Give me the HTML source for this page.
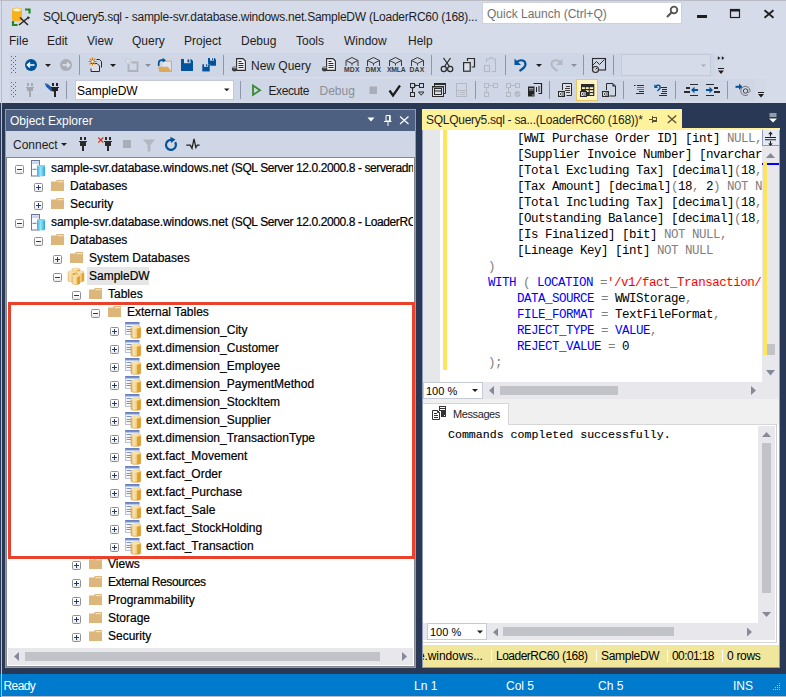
<!DOCTYPE html>
<html><head><meta charset="utf-8">
<style>
*{margin:0;padding:0;box-sizing:border-box}
html,body{width:786px;height:697px;overflow:hidden;background:#d6dbe9;font-family:"Liberation Sans",sans-serif;font-size:12px;color:#1e1e1e}
.a{position:absolute}
.t{position:absolute;white-space:nowrap;line-height:1}
svg{position:absolute;overflow:visible}
.exp{position:absolute;width:9px;height:9px;border:1px solid #8f8f8f;border-radius:1.5px;background:linear-gradient(#fff 45%,#e6e6e6)}
.tree{color:#000;font-size:12px;-webkit-text-stroke:0.2px #000}
.code{font-family:"Liberation Mono",monospace;font-size:12.5px;letter-spacing:-0.5px;color:#000}
.kw{color:#0000ff}.op{color:#808080}.st{color:#ff0000}
.sb{position:absolute;background:#e8e8ec}
.th{position:absolute;background:#c2c3c9}
.qs{color:#000;font-size:12px}
.qsep{position:absolute;width:1px;height:12px;background:#fff}
</style></head><body>
<!-- window frame -->


<!-- TITLE BAR -->
<div class="t" style="left:43px;top:11px;font-size:12px;letter-spacing:-0.25px;color:#1e1e1e">SQLQuery5.sql - sample-svr.database.windows.net.SampleDW (LoaderRC60 (168)...</div>
<div class="a" style="left:482px;top:2px;width:200px;height:22px;background:#fff;border:1px solid #cdd1dc"></div>
<div class="t" style="left:487px;top:8px;font-size:12px;color:#717171">Quick Launch (Ctrl+Q)</div>

<!-- MENU -->
<div class="t" style="left:9px;top:35px">File</div>
<div class="t" style="left:47px;top:35px">Edit</div>
<div class="t" style="left:87px;top:35px">View</div>
<div class="t" style="left:132px;top:35px">Query</div>
<div class="t" style="left:184px;top:35px">Project</div>
<div class="t" style="left:241px;top:35px">Debug</div>
<div class="t" style="left:296px;top:35px">Tools</div>
<div class="t" style="left:344px;top:35px">Window</div>
<div class="t" style="left:408px;top:35px">Help</div>

<!-- TOOLBARS -->
<div class="a" style="left:9px;top:53px;width:706px;height:24px;background:#cfd6e5"></div>
<div class="a" style="left:715px;top:53px;width:11px;height:24px;background:#d3d9e6"></div>
<div class="a" style="left:9px;top:79px;width:746px;height:22px;background:#cfd6e5"></div>
<div class="a" style="left:755px;top:79px;width:11px;height:22px;background:#d3d9e6"></div>
<svg style="left:0;top:0" width="786" height="104" viewBox="0 0 786 104" shape-rendering="auto">
<defs>
<pattern id="grip" x="11" y="56" width="4" height="4" patternUnits="userSpaceOnUse"><rect x="0" y="0" width="1" height="1" fill="#5f6679"/><rect x="2" y="2" width="1" height="1" fill="#5f6679"/></pattern><pattern id="grip2" x="11" y="82" width="4" height="4" patternUnits="userSpaceOnUse"><rect x="0" y="0" width="1" height="1" fill="#5f6679"/><rect x="2" y="2" width="1" height="1" fill="#5f6679"/></pattern>
</defs>
<!-- ===== TOOLBAR 1 ===== -->
<rect x="11" y="56" width="5" height="17" fill="url(#grip)"/>
<!-- back -->
<circle cx="31" cy="65" r="6" fill="#00539c"/>
<path d="M27.5 65h7M30 62.5L27.5 65L30 67.5" stroke="#fff" stroke-width="1.6" fill="none"/>
<path d="M45 64h6l-3 3z" fill="#1e1e1e"/>
<!-- forward gray -->
<circle cx="66" cy="65" r="6" fill="#a9adb7"/>
<path d="M62.5 65h7M67 62.5L69.5 65L67 67.5" stroke="#dfe3ec" stroke-width="1.6" fill="none"/>
<rect x="79" y="55" width="1" height="20" fill="#8e97ab"/>
<!-- new project -->
<path d="M96.5 59.5h3l2 2v6" fill="none" stroke="#2b2b2b" stroke-width="1"/>
<path d="M90.5 64v-0.5h6.5l2.5 2.5v5.5h-8.5v-3" fill="#dcdfe8" stroke="#2b2b2b" stroke-width="1"/>
<path d="M92.5 57.5v8M88.5 61.5h8M89.7 58.7l5.6 5.6M95.3 58.7l-5.6 5.6" stroke="#d67d0a" stroke-width="1.1"/>
<circle cx="92.5" cy="61.5" r="1.5" fill="#fff" stroke="#d67d0a" stroke-width="0.8"/>
<path d="M110 64h6l-3 3z" fill="#1e1e1e"/>
<!-- add item gray -->
<path d="M128.5 64v7h9v-8.5h-6" fill="none" stroke="#aeb2bc" stroke-width="1.8"/>
<path d="M128 57.5v7M124.5 61h7M125.5 58.5l5 5M130.5 58.5l-5 5" stroke="#c8cbd3" stroke-width="1"/>
<circle cx="128" cy="61" r="1.2" fill="#e4e6ec"/>
<path d="M145 64h6l-3 3z" fill="#8a8e98"/>
<!-- open -->
<path d="M162.5 61.2h9v10.5h-9z" fill="#dfe3ec"/>
<path d="M162.5 61.2h9v10.7" fill="none" stroke="#dcaa5a" stroke-width="1"/>
<path d="M158 66.8h10l4 5.2h-12.5z" fill="#dcaa5a"/>
<path d="M158.7 66v-2.8c0-2 1.2-3 3.2-3h1.6" fill="none" stroke="#00539c" stroke-width="1.7"/>
<path d="M162.7 57.8l3.3 2.4-3.3 2.4z" fill="#00539c"/>
<!-- save -->
<path d="M181 59h10l2 2v10h-12z" fill="#00539c"/>
<rect x="184" y="59" width="6.5" height="4.2" fill="#d6dbe9"/>
<rect x="187.5" y="59.5" width="1.8" height="2.8" fill="#00539c"/>
<!-- save all -->
<path d="M208 58h6.5l1.5 1.5v6.3h-8z" fill="#00539c"/>
<rect x="210" y="58" width="4" height="2.6" fill="#d6dbe9"/><rect x="212" y="58.3" width="1.2" height="1.8" fill="#00539c"/>
<path d="M202 64h6.5l1.5 1.5v6.3h-8z" fill="#00539c" stroke="#cfd6e5" stroke-width="0.6"/>
<rect x="204" y="64.2" width="4" height="2.6" fill="#d6dbe9"/><rect x="206" y="64.5" width="1.2" height="1.8" fill="#00539c"/>
<rect x="223" y="55" width="1" height="20" fill="#8e97ab"/>
<!-- new query -->
<g id="nq">
<path d="M236.6 58.6h6.4l2.4 2.4v9.4h-8.8z" fill="#f1f2f6" stroke="#2b2b2b" stroke-width="1.1"/>
<path d="M238.5 61.5h3M238.5 63.5h5M238.5 65.5h5M238.5 67.5h5" stroke="#2b2b2b" stroke-width="1"/>
<ellipse cx="234.5" cy="69" rx="2.6" ry="2.4" fill="#3b3b3b"/>
<ellipse cx="234.5" cy="67.4" rx="2.4" ry="1" fill="#9a9a9a"/>
</g>
<use href="#nq" x="90"/>
<!-- MDX DMX XMLA DAX -->
<g id="cube" fill="none" stroke="#3a3a3a" stroke-width="1">
<path d="M346 66v-5.5l6-3 6 3v5.5M346 60.5l6 3 6-3M352 63.5v2"/>
</g>
<use href="#cube" x="21.5"/><use href="#cube" x="43.5"/><use href="#cube" x="65.5"/>
<g font-family="Liberation Sans,sans-serif" font-size="6.8" font-weight="bold" fill="#3a3a3a" letter-spacing="0.2">
<text x="344" y="72.3">MDX</text><text x="365.5" y="72.3">DMX</text><text x="387" y="72.3" letter-spacing="-0.2">XMLA</text><text x="409.5" y="72.3">DAX</text>
</g>
<rect x="431" y="55" width="1" height="20" fill="#8e97ab"/>
<!-- cut -->
<path d="M443.5 58l6 8.5M450.5 58l-6 8.5" stroke="#2b2b2b" stroke-width="1.3"/>
<circle cx="443.8" cy="69" r="2.6" fill="none" stroke="#2b2b2b" stroke-width="1.2"/>
<circle cx="450.2" cy="69" r="2.6" fill="none" stroke="#2b2b2b" stroke-width="1.2"/>
<!-- copy -->
<path d="M467.5 61v-2.5h7v8.5h-2.8" fill="none" stroke="#2b2b2b" stroke-width="1.2"/>
<rect x="463.6" y="62.6" width="6.6" height="8.6" fill="#dcdfe8" stroke="#2b2b2b" stroke-width="1.2"/>
<!-- paste gray -->
<path d="M486.5 62v-3h3l1-1.5h1l1 1.5h3v12.5h-4" fill="none" stroke="#b4b8c2" stroke-width="1.1"/>
<rect x="484.5" y="65.5" width="5" height="6" fill="none" stroke="#b4b8c2" stroke-width="1.1"/>
<rect x="505" y="55" width="1" height="20" fill="#8e97ab"/>
<!-- undo -->
<path d="M516.5 62.5c2-3 8.5-3.5 9 1.5c0.3 3-3 5-6 7" fill="none" stroke="#00539c" stroke-width="2.2"/>
<path d="M514.5 58.5v6.5h6.5z" fill="#00539c"/>
<path d="M536 64h6l-3 3z" fill="#1e1e1e"/>
<!-- redo gray -->
<path d="M560.5 62.5c-2-3-8.5-3.5-9 1.5c-0.3 3 3 5 6 7" fill="none" stroke="#b4b8c2" stroke-width="2"/>
<path d="M562.5 58.5v6.5h-6.5z" fill="#b4b8c2"/>
<path d="M571 64h6l-3 3z" fill="#8a8e98"/>
<rect x="583" y="55" width="1" height="20" fill="#8e97ab"/>
<!-- activity monitor -->
<rect x="592.5" y="58.5" width="13" height="11.5" fill="none" stroke="#2b2b2b" stroke-width="1.1"/>
<path d="M593 65l3.5-3.5 3 3 5-5" fill="none" stroke="#2b2b2b" stroke-width="1"/>
<circle cx="595.5" cy="69.5" r="3" fill="#cfd6e5" stroke="#2b2b2b" stroke-width="1.1"/>
<path d="M595.5 69.5l1.5-1.5" stroke="#2b2b2b"/>
<rect x="613" y="55" width="1" height="20" fill="#8e97ab"/>
<rect x="621.5" y="54.5" width="89" height="21" fill="#d6dbe9" stroke="#c3c9d8"/>
<path d="M701 64.5h5l-2.5 2.5z" fill="#a6abb8"/>
<!-- overflow 1 -->
<path d="M717.8 56.3l2.6 1.8-2.6 1.8zM721.8 56.3l2.6 1.8-2.6 1.8z" fill="#1e1e1e"/>
<rect x="718" y="68" width="6" height="1" fill="#1e1e1e"/>
<path d="M718 70.5h6l-3 3.5z" fill="#1e1e1e"/>

<!-- ===== TOOLBAR 2 ===== -->
<rect x="11" y="82" width="5" height="16" fill="url(#grip2)"/>
<!-- plug gray -->
<g fill="#a4a7ae"><rect x="27" y="83" width="2" height="3"/><rect x="31" y="83" width="2" height="3"/><rect x="26" y="87" width="8" height="1"/><rect x="27" y="88" width="6" height="3"/><rect x="29" y="91" width="2" height="6"/></g>
<!-- change connection -->
<path d="M46.5 84.8l6 5.6" stroke="#1a5aa8" stroke-width="3.2"/><path d="M45.3 83.5l1.2 1.3" stroke="#1a5aa8" stroke-width="1.6"/><path d="M52.5 90.4l1.3 1.1" stroke="#1a5aa8" stroke-width="1.2"/>
<g fill="#232323"><rect x="52" y="83" width="2" height="3"/><rect x="56" y="83" width="2" height="3"/><rect x="51" y="87" width="8" height="1"/><rect x="52" y="88" width="6" height="3"/><rect x="54" y="91" width="2" height="6"/></g>
<rect x="66" y="81" width="1" height="18" fill="#8e97ab"/>
<!-- db combo -->
<rect x="75.5" y="80.5" width="158" height="19" fill="#fff" stroke="#c6cad6"/>
<path d="M224 88.5h5.5l-2.75 2.75z" fill="#1e1e1e"/>
<rect x="240" y="81" width="1" height="18" fill="#8e97ab"/>
<!-- execute -->
<path d="M253 85.5l7 4.7-7 4.7z" fill="none" stroke="#388a34" stroke-width="1.8"/>
<rect x="369.5" y="86.5" width="7.5" height="7.5" fill="#a9adb7"/>
<path d="M389.5 90.5l3.5 5 7-10" fill="none" stroke="#1e1e1e" stroke-width="2.2"/>
<!-- estimated plan -->
<rect x="410.5" y="83.5" width="4" height="4" fill="none" stroke="#2b2b2b" stroke-width="1"/><rect x="419.5" y="83.5" width="4" height="4" fill="none" stroke="#2b2b2b" stroke-width="1"/><rect x="410.5" y="92.5" width="4" height="4" fill="none" stroke="#2b2b2b" stroke-width="1"/>
<path d="M415 85.5h4M412.5 88v4" stroke="#2b2b2b" stroke-width="1"/>
<circle cx="415.5" cy="85.5" r="0.9" fill="#2b2b2b"/><circle cx="412.5" cy="88.5" r="0.9" fill="#2b2b2b"/>
<path d="M418.5 92h5.5l-2.75 3.2z" fill="none" stroke="#2b2b2b" stroke-width="1"/>
<!-- query options windows -->
<rect x="434" y="83" width="12" height="2" fill="#2b2b2b"/>
<path d="M434.5 85v1M445.5 85v8.5h-1.5" fill="none" stroke="#2b2b2b" stroke-width="1"/>
<rect x="432.5" y="86.5" width="11" height="10" fill="#dcdfe8" stroke="#2b2b2b" stroke-width="1"/>
<rect x="432" y="86" width="12" height="1.5" fill="#2b2b2b"/>
<rect x="434.5" y="88.5" width="7" height="6" fill="none" stroke="#2b2b2b" stroke-width="1"/>
<rect x="435" y="90.5" width="6" height="1" fill="#2b2b2b"/>
<!-- intellisense gray -->
<rect x="456.5" y="83.5" width="10" height="13" fill="none" stroke="#b4b8c2" stroke-width="1"/>
<rect x="457" y="90" width="9" height="1" fill="#b4b8c2"/>
<rect x="458" y="92" width="1" height="1" fill="#b4b8c2"/><rect x="460" y="92" width="5" height="1" fill="#b4b8c2"/>
<rect x="458" y="94" width="1" height="1" fill="#b4b8c2"/><rect x="460" y="94" width="5" height="1" fill="#b4b8c2"/>
<rect x="475" y="81" width="1" height="18" fill="#8e97ab"/>
<!-- actual plan gray -->
<rect x="484.5" y="83.5" width="4" height="4" fill="none" stroke="#b4b8c2" stroke-width="1"/><rect x="493.5" y="83.5" width="4" height="4" fill="none" stroke="#b4b8c2" stroke-width="1"/><rect x="484.5" y="92.5" width="4" height="4" fill="none" stroke="#b4b8c2" stroke-width="1"/>
<path d="M489 85.5h4M486.5 88v4" stroke="#b4b8c2" stroke-width="1"/>
<!-- live stats gray -->
<rect x="506.5" y="83.5" width="4" height="4" fill="none" stroke="#b4b8c2" stroke-width="1"/><rect x="515.5" y="83.5" width="4" height="4" fill="none" stroke="#b4b8c2" stroke-width="1"/><rect x="506.5" y="92.5" width="4" height="4" fill="none" stroke="#b4b8c2" stroke-width="1"/>
<path d="M511 85.5h4M508.5 88v4" stroke="#b4b8c2" stroke-width="1"/>
<circle cx="517.5" cy="94" r="3" fill="#b4b8c2"/>
<path d="M515.8 94l1.2 1.2 2.2-2.4" fill="none" stroke="#cfd6e5" stroke-width="0.9"/>
<!-- client statistics -->
<path d="M533.5 83.5h8v10h-3" fill="none" stroke="#232323" stroke-width="1.2"/>
<path d="M536.5 87v5M539 86v6" stroke="#232323" stroke-width="1"/>
<rect x="528" y="86.5" width="6.5" height="10" fill="#232323"/>
<path d="M529 88.5h4.5M529 90h4.5" stroke="#cfd6e5" stroke-width="0.7"/>
<rect x="532.5" y="94.5" width="1" height="1" fill="#fff"/>
<rect x="549" y="81" width="1" height="18" fill="#8e97ab"/>
<!-- results to text -->
<path d="M562.5 90v-6.5h9v12h-5" fill="#dcdfe8" stroke="#2b2b2b" stroke-width="1"/>
<path d="M566 86.5h4M565 88.5h5M565 90.5h5M566 92.5h4" stroke="#2b2b2b" stroke-width="0.9"/>
<rect x="558" y="91" width="7" height="6" fill="#2b2b2b"/><path d="M559.5 92.5h1.8v3h-1.8z" fill="none" stroke="#fff" stroke-width="0.9"/><rect x="562.5" y="92" width="1" height="4" fill="#fff"/>
<!-- results to grid highlighted -->
<rect x="576.5" y="79.5" width="21" height="21" fill="#fff3c0" stroke="#e8c864"/>
<rect x="581" y="84" width="13.3" height="12" fill="#2b2b2b"/>
<rect x="582" y="87.2" width="2.9" height="1.8" fill="#fff3c0"/><rect x="585.8" y="87.2" width="2.9" height="1.8" fill="#fff3c0"/><rect x="589.7" y="87.2" width="3.5" height="1.8" fill="#fff3c0"/>
<rect x="585.8" y="90.2" width="2.9" height="1.8" fill="#fff3c0"/><rect x="589.7" y="90.2" width="3.5" height="1.8" fill="#fff3c0"/>
<rect x="589.7" y="93.1" width="3.5" height="1.8" fill="#fff3c0"/>
<rect x="580" y="91" width="7" height="6" fill="#2b2b2b"/><path d="M581.5 92.5h1.8v3h-1.8z" fill="none" stroke="#fff" stroke-width="0.9"/><rect x="584.5" y="92" width="1" height="4" fill="#fff"/>
<!-- results to file -->
<path d="M606.5 90v-6.5h6.5l2.5 2.5v10h-6" fill="none" stroke="#2b2b2b" stroke-width="1"/>
<path d="M612.5 83.5v3h3z" fill="#2b2b2b"/>
<rect x="602" y="91" width="7" height="6" fill="#2b2b2b"/><path d="M603.5 92.5h1.8v3h-1.8z" fill="none" stroke="#fff" stroke-width="0.9"/><rect x="606.5" y="92" width="1" height="4" fill="#fff"/>
<rect x="623" y="81" width="1" height="18" fill="#8e97ab"/>
<!-- comment -->
<path d="M634 85.5h1.5M637 85.5h7M639 91.5h5M636 93.5h8" stroke="#2b2b2b" stroke-width="1"/>
<path d="M637 87.5h7M637 89.5h7" stroke="#3e9c3a" stroke-width="1"/>
<!-- uncomment -->
<path d="M655.8 86.8c0.3-1.8 4.2-2.3 4.4 0.2c0.2 1.8-1.4 3-2.8 4" fill="none" stroke="#00539c" stroke-width="1.5"/>
<path d="M654.3 84.3v3.8h3.8z" fill="#00539c"/>
<path d="M661 87.5h6M662 89.5h5M662 91.5h5M661 93.5h6M659 95.5h8" stroke="#2b2b2b" stroke-width="1"/>
<rect x="675" y="81" width="1" height="18" fill="#8e97ab"/>
<!-- decrease indent -->
<rect x="690" y="84" width="8" height="1" fill="#2b2b2b"/>
<rect x="690" y="95" width="8" height="1" fill="#2b2b2b"/>
<rect x="686" y="87" width="4" height="2" fill="#2b2b2b"/>
<rect x="684" y="91" width="6" height="2" fill="#2b2b2b"/>
<rect x="693.5" y="89" width="4.5" height="2" fill="#00539c"/>
<path d="M691 90l3.5-3.2v6.4z" fill="#00539c"/>
<!-- increase indent -->
<rect x="706" y="84" width="8" height="1" fill="#2b2b2b"/>
<rect x="706" y="95" width="8" height="1" fill="#2b2b2b"/>
<rect x="714" y="87" width="4" height="2" fill="#2b2b2b"/>
<rect x="714" y="91" width="6" height="2" fill="#2b2b2b"/>
<rect x="706" y="89" width="4.5" height="2" fill="#00539c"/>
<path d="M713 90l-3.5-3.2v6.4z" fill="#00539c"/>
<rect x="727" y="81" width="1" height="18" fill="#8e97ab"/>
<!-- specify values -->
<circle cx="745.5" cy="91" r="2.2" fill="none" stroke="#444" stroke-width="1"/>
<path d="M747.7 89v2.6c0 1.3 2.3 1.3 2.3-0.8a4.6 4.6 0 1 0 -2 3.9" fill="none" stroke="#666" stroke-width="0.9"/>
<path d="M735.5 86.8h6" stroke="#00539c" stroke-width="2"/>
<path d="M739 83.6l3.3 3.2-3.3 3.2z" fill="#00539c"/>
<!-- overflow 2 -->
<rect x="758" y="92" width="6" height="1" fill="#1e1e1e"/>
<path d="M758 94h6l-3 3.5z" fill="#1e1e1e"/>
</svg>

<div class="t" style="left:251px;top:60px;color:#1e1e1e">New Query</div>
<div class="t" style="left:77px;top:85px;color:#000">SampleDW</div>
<div class="t" style="left:268.5px;top:85px;letter-spacing:-0.4px;color:#1e1e1e">Execute</div>
<div class="t" style="left:319.5px;top:85px;color:#8a8e98">Debug</div>

<!-- dark environment -->
<div class="a" style="left:2px;top:103px;width:784px;height:571px;background:#293955"></div>
<div class="a" style="left:0;top:103px;width:1px;height:594px;background:#293955"></div>

<!-- OBJECT EXPLORER -->
<div class="a" style="left:5px;top:109px;width:411px;height:559px;background:#8e9bbc"></div>
<div class="a" style="left:6px;top:110px;width:409px;height:21px;background:#4d6082"></div>
<div class="t" style="left:10px;top:115px;color:#fff">Object Explorer</div>
<div class="a" style="left:6px;top:131px;width:409px;height:26px;background:#cfd6e5"></div>
<div class="t" style="left:13px;top:139px;color:#1e1e1e">Connect</div>
<div class="a" style="left:6px;top:157px;width:409px;height:510px;background:#fff;border:1px solid #828790"></div>
<div class="a" style="left:7px;top:158px;width:406px;height:490px;overflow:hidden">
<div class="a" style="left:-7px;top:-158px;width:800px;height:800px">
<div class="exp" style="left:15px;top:165px"></div><div class="a" style="left:17px;top:169px;width:5px;height:1px;background:#1c3a7a"></div>
<svg style="left:31px;top:161px" width="16" height="16"><defs><linearGradient id="cyl" x1="0" x2="1"><stop offset="0" stop-color="#2eb3e0"/><stop offset="0.45" stop-color="#9ee3f8"/><stop offset="1" stop-color="#29a8d8"/></linearGradient></defs><rect x="0.5" y="-0.5" width="8" height="15.5" fill="#fbfcff" stroke="#6d7690" stroke-width="1"/><rect x="1.2" y="0.3" width="6.6" height="2.8" fill="#c9d3ea"/><path d="M1.5 8.3h4" stroke="#6d7690" stroke-width="1"/><path d="M6 5c0-1.2 8-1.2 8 0v9.6c0 1.2-8 1.2-8 0z" fill="url(#cyl)"/><ellipse cx="10" cy="5" rx="4" ry="1" fill="#7fd4f0"/></svg>
<div class="t tree" style="left:51px;top:162px"><span style="letter-spacing:-0.1px">sample-svr.database.windows.net </span><span style="letter-spacing:-0.4px">(SQL Server 12.0.2000.8 - serveradmin)</span></div>
<div class="exp" style="left:34px;top:183px"></div><div class="a" style="left:36px;top:187px;width:5px;height:1px;background:#1c3a7a"></div><div class="a" style="left:38px;top:185px;width:1px;height:5px;background:#1c3a7a"></div>
<svg style="left:50px;top:179px" width="16" height="16"><path d="M1 2.5h5l0.8-1.5h7.2v11H1z" fill="#dcb67a"/><path d="M7.5 2h6v1.2h-6z" fill="#f3e3c3"/></svg>
<div class="t tree" style="left:70px;top:180px">Databases</div>
<div class="exp" style="left:34px;top:201px"></div><div class="a" style="left:36px;top:205px;width:5px;height:1px;background:#1c3a7a"></div><div class="a" style="left:38px;top:203px;width:1px;height:5px;background:#1c3a7a"></div>
<svg style="left:50px;top:197px" width="16" height="16"><path d="M1 2.5h5l0.8-1.5h7.2v11H1z" fill="#dcb67a"/><path d="M7.5 2h6v1.2h-6z" fill="#f3e3c3"/></svg>
<div class="t tree" style="left:70px;top:198px">Security</div>
<div class="exp" style="left:15px;top:219px"></div><div class="a" style="left:17px;top:223px;width:5px;height:1px;background:#1c3a7a"></div>
<svg style="left:31px;top:215px" width="16" height="16"><defs><linearGradient id="cyl" x1="0" x2="1"><stop offset="0" stop-color="#2eb3e0"/><stop offset="0.45" stop-color="#9ee3f8"/><stop offset="1" stop-color="#29a8d8"/></linearGradient></defs><rect x="0.5" y="-0.5" width="8" height="15.5" fill="#fbfcff" stroke="#6d7690" stroke-width="1"/><rect x="1.2" y="0.3" width="6.6" height="2.8" fill="#c9d3ea"/><path d="M1.5 8.3h4" stroke="#6d7690" stroke-width="1"/><path d="M6 5c0-1.2 8-1.2 8 0v9.6c0 1.2-8 1.2-8 0z" fill="url(#cyl)"/><ellipse cx="10" cy="5" rx="4" ry="1" fill="#7fd4f0"/></svg>
<div class="t tree" style="left:51px;top:216px"><span style="letter-spacing:-0.1px">sample-svr.database.windows.net </span><span style="letter-spacing:-0.4px">(SQL Server 12.0.2000.8 - LoaderRC60)</span></div>
<div class="exp" style="left:34px;top:237px"></div><div class="a" style="left:36px;top:241px;width:5px;height:1px;background:#1c3a7a"></div>
<svg style="left:50px;top:233px" width="16" height="16"><path d="M1 2.5h5l0.8-1.5h7.2v11H1z" fill="#dcb67a"/><path d="M7.5 2h6v1.2h-6z" fill="#f3e3c3"/></svg>
<div class="t tree" style="left:70px;top:234px">Databases</div>
<div class="exp" style="left:53px;top:255px"></div><div class="a" style="left:55px;top:259px;width:5px;height:1px;background:#1c3a7a"></div><div class="a" style="left:57px;top:257px;width:1px;height:5px;background:#1c3a7a"></div>
<svg style="left:69px;top:251px" width="16" height="16"><path d="M1 2.5h5l0.8-1.5h7.2v11H1z" fill="#dcb67a"/><path d="M7.5 2h6v1.2h-6z" fill="#f3e3c3"/></svg>
<div class="t tree" style="left:89px;top:252px">System Databases</div>
<div class="exp" style="left:53px;top:273px"></div><div class="a" style="left:55px;top:277px;width:5px;height:1px;background:#1c3a7a"></div>
<svg style="left:67px;top:266px" width="18" height="18"><defs><linearGradient id="gold" x1="0" x2="1"><stop offset="0" stop-color="#f0cf8e"/><stop offset="0.35" stop-color="#f8e3b5"/><stop offset="0.65" stop-color="#eec77a"/><stop offset="0.7" stop-color="#e6a325"/><stop offset="1" stop-color="#e09a1c"/></linearGradient></defs><path d="M5.0 3.2c0-1.4 8 -1.4 8 0v3.5c0 1.4 -8 1.4 -8 0z" fill="url(#gold)" stroke="#d9a441" stroke-width="0.5"/><ellipse cx="9" cy="3.2" rx="4.0" ry="1.1" fill="#f7dfa8"/><path d="M1.0999999999999996 6.2c0-1.4 7 -1.4 7 0v8.5c0 1.4 -7 1.4 -7 0z" fill="url(#gold)" stroke="#d9a441" stroke-width="0.5"/><ellipse cx="4.6" cy="6.2" rx="3.5" ry="1.1" fill="#f7dfa8"/><path d="M9.9 6.2c0-1.4 7 -1.4 7 0v8.5c0 1.4 -7 1.4 -7 0z" fill="url(#gold)" stroke="#d9a441" stroke-width="0.5"/><ellipse cx="13.4" cy="6.2" rx="3.5" ry="1.1" fill="#f7dfa8"/><path d="M5.1 9.8c0-1.4 7.8 -1.4 7.8 0v7.6c0 1.4 -7.8 1.4 -7.8 0z" fill="url(#gold)" stroke="#d9a441" stroke-width="0.5"/><ellipse cx="9" cy="9.8" rx="3.9" ry="1.1" fill="#f7dfa8"/></svg>
<div class="a" style="left:87px;top:267px;width:62px;height:18px;background:#e6e6e6"></div>
<div class="t tree" style="left:89px;top:270px">SampleDW</div>
<div class="exp" style="left:72px;top:291px"></div><div class="a" style="left:74px;top:295px;width:5px;height:1px;background:#1c3a7a"></div>
<svg style="left:88px;top:287px" width="16" height="16"><path d="M1 2.5h5l0.8-1.5h7.2v11H1z" fill="#dcb67a"/><path d="M7.5 2h6v1.2h-6z" fill="#f3e3c3"/></svg>
<div class="t tree" style="left:108px;top:288px">Tables</div>
<div class="exp" style="left:91px;top:309px"></div><div class="a" style="left:93px;top:313px;width:5px;height:1px;background:#1c3a7a"></div>
<svg style="left:107px;top:305px" width="16" height="16"><path d="M1 2.5h5l0.8-1.5h7.2v11H1z" fill="#dcb67a"/><path d="M7.5 2h6v1.2h-6z" fill="#f3e3c3"/></svg>
<div class="t tree" style="left:127px;top:306px">External Tables</div>
<div class="exp" style="left:110px;top:327px"></div><div class="a" style="left:112px;top:331px;width:5px;height:1px;background:#1c3a7a"></div><div class="a" style="left:114px;top:329px;width:1px;height:5px;background:#1c3a7a"></div>
<svg style="left:125px;top:322px" width="18" height="18"><defs><linearGradient id="hdr" x1="0" y1="0" x2="0" y2="1"><stop offset="0" stop-color="#3f5fb0"/><stop offset="1" stop-color="#a9bbe6"/></linearGradient><linearGradient id="gold2" x1="0" x2="1"><stop offset="0" stop-color="#e8b655"/><stop offset="0.3" stop-color="#f8e5bb"/><stop offset="0.62" stop-color="#eec77a"/><stop offset="0.68" stop-color="#e6a325"/><stop offset="1" stop-color="#df9a1a"/></linearGradient></defs><rect x="0.5" y="0.5" width="13.5" height="12" fill="#f5f7fc" stroke="#a8b4d0" stroke-width="0.8"/><rect x="0.3" y="0.3" width="14" height="2.4" fill="url(#hdr)"/><path d="M1.5 4.5h5M1.5 7.5h5M1.5 9.5h5" stroke="#7d92cc" stroke-width="1"/><path d="M6 5.2c0-1.5 9.6-1.5 9.6 0v10c0 1.5-9.6 1.5-9.6 0z" fill="url(#gold2)" stroke="#c98a1e" stroke-width="0.5"/><ellipse cx="10.8" cy="5.2" rx="4.8" ry="1.2" fill="#f9e2ae"/></svg>
<div class="t tree" style="left:146px;top:324px">ext.dimension_City</div>
<div class="exp" style="left:110px;top:345px"></div><div class="a" style="left:112px;top:349px;width:5px;height:1px;background:#1c3a7a"></div><div class="a" style="left:114px;top:347px;width:1px;height:5px;background:#1c3a7a"></div>
<svg style="left:125px;top:340px" width="18" height="18"><defs><linearGradient id="hdr" x1="0" y1="0" x2="0" y2="1"><stop offset="0" stop-color="#3f5fb0"/><stop offset="1" stop-color="#a9bbe6"/></linearGradient><linearGradient id="gold2" x1="0" x2="1"><stop offset="0" stop-color="#e8b655"/><stop offset="0.3" stop-color="#f8e5bb"/><stop offset="0.62" stop-color="#eec77a"/><stop offset="0.68" stop-color="#e6a325"/><stop offset="1" stop-color="#df9a1a"/></linearGradient></defs><rect x="0.5" y="0.5" width="13.5" height="12" fill="#f5f7fc" stroke="#a8b4d0" stroke-width="0.8"/><rect x="0.3" y="0.3" width="14" height="2.4" fill="url(#hdr)"/><path d="M1.5 4.5h5M1.5 7.5h5M1.5 9.5h5" stroke="#7d92cc" stroke-width="1"/><path d="M6 5.2c0-1.5 9.6-1.5 9.6 0v10c0 1.5-9.6 1.5-9.6 0z" fill="url(#gold2)" stroke="#c98a1e" stroke-width="0.5"/><ellipse cx="10.8" cy="5.2" rx="4.8" ry="1.2" fill="#f9e2ae"/></svg>
<div class="t tree" style="left:146px;top:342px">ext.dimension_Customer</div>
<div class="exp" style="left:110px;top:363px"></div><div class="a" style="left:112px;top:367px;width:5px;height:1px;background:#1c3a7a"></div><div class="a" style="left:114px;top:365px;width:1px;height:5px;background:#1c3a7a"></div>
<svg style="left:125px;top:358px" width="18" height="18"><defs><linearGradient id="hdr" x1="0" y1="0" x2="0" y2="1"><stop offset="0" stop-color="#3f5fb0"/><stop offset="1" stop-color="#a9bbe6"/></linearGradient><linearGradient id="gold2" x1="0" x2="1"><stop offset="0" stop-color="#e8b655"/><stop offset="0.3" stop-color="#f8e5bb"/><stop offset="0.62" stop-color="#eec77a"/><stop offset="0.68" stop-color="#e6a325"/><stop offset="1" stop-color="#df9a1a"/></linearGradient></defs><rect x="0.5" y="0.5" width="13.5" height="12" fill="#f5f7fc" stroke="#a8b4d0" stroke-width="0.8"/><rect x="0.3" y="0.3" width="14" height="2.4" fill="url(#hdr)"/><path d="M1.5 4.5h5M1.5 7.5h5M1.5 9.5h5" stroke="#7d92cc" stroke-width="1"/><path d="M6 5.2c0-1.5 9.6-1.5 9.6 0v10c0 1.5-9.6 1.5-9.6 0z" fill="url(#gold2)" stroke="#c98a1e" stroke-width="0.5"/><ellipse cx="10.8" cy="5.2" rx="4.8" ry="1.2" fill="#f9e2ae"/></svg>
<div class="t tree" style="left:146px;top:360px">ext.dimension_Employee</div>
<div class="exp" style="left:110px;top:381px"></div><div class="a" style="left:112px;top:385px;width:5px;height:1px;background:#1c3a7a"></div><div class="a" style="left:114px;top:383px;width:1px;height:5px;background:#1c3a7a"></div>
<svg style="left:125px;top:376px" width="18" height="18"><defs><linearGradient id="hdr" x1="0" y1="0" x2="0" y2="1"><stop offset="0" stop-color="#3f5fb0"/><stop offset="1" stop-color="#a9bbe6"/></linearGradient><linearGradient id="gold2" x1="0" x2="1"><stop offset="0" stop-color="#e8b655"/><stop offset="0.3" stop-color="#f8e5bb"/><stop offset="0.62" stop-color="#eec77a"/><stop offset="0.68" stop-color="#e6a325"/><stop offset="1" stop-color="#df9a1a"/></linearGradient></defs><rect x="0.5" y="0.5" width="13.5" height="12" fill="#f5f7fc" stroke="#a8b4d0" stroke-width="0.8"/><rect x="0.3" y="0.3" width="14" height="2.4" fill="url(#hdr)"/><path d="M1.5 4.5h5M1.5 7.5h5M1.5 9.5h5" stroke="#7d92cc" stroke-width="1"/><path d="M6 5.2c0-1.5 9.6-1.5 9.6 0v10c0 1.5-9.6 1.5-9.6 0z" fill="url(#gold2)" stroke="#c98a1e" stroke-width="0.5"/><ellipse cx="10.8" cy="5.2" rx="4.8" ry="1.2" fill="#f9e2ae"/></svg>
<div class="t tree" style="left:146px;top:378px">ext.dimension_PaymentMethod</div>
<div class="exp" style="left:110px;top:399px"></div><div class="a" style="left:112px;top:403px;width:5px;height:1px;background:#1c3a7a"></div><div class="a" style="left:114px;top:401px;width:1px;height:5px;background:#1c3a7a"></div>
<svg style="left:125px;top:394px" width="18" height="18"><defs><linearGradient id="hdr" x1="0" y1="0" x2="0" y2="1"><stop offset="0" stop-color="#3f5fb0"/><stop offset="1" stop-color="#a9bbe6"/></linearGradient><linearGradient id="gold2" x1="0" x2="1"><stop offset="0" stop-color="#e8b655"/><stop offset="0.3" stop-color="#f8e5bb"/><stop offset="0.62" stop-color="#eec77a"/><stop offset="0.68" stop-color="#e6a325"/><stop offset="1" stop-color="#df9a1a"/></linearGradient></defs><rect x="0.5" y="0.5" width="13.5" height="12" fill="#f5f7fc" stroke="#a8b4d0" stroke-width="0.8"/><rect x="0.3" y="0.3" width="14" height="2.4" fill="url(#hdr)"/><path d="M1.5 4.5h5M1.5 7.5h5M1.5 9.5h5" stroke="#7d92cc" stroke-width="1"/><path d="M6 5.2c0-1.5 9.6-1.5 9.6 0v10c0 1.5-9.6 1.5-9.6 0z" fill="url(#gold2)" stroke="#c98a1e" stroke-width="0.5"/><ellipse cx="10.8" cy="5.2" rx="4.8" ry="1.2" fill="#f9e2ae"/></svg>
<div class="t tree" style="left:146px;top:396px">ext.dimension_StockItem</div>
<div class="exp" style="left:110px;top:417px"></div><div class="a" style="left:112px;top:421px;width:5px;height:1px;background:#1c3a7a"></div><div class="a" style="left:114px;top:419px;width:1px;height:5px;background:#1c3a7a"></div>
<svg style="left:125px;top:412px" width="18" height="18"><defs><linearGradient id="hdr" x1="0" y1="0" x2="0" y2="1"><stop offset="0" stop-color="#3f5fb0"/><stop offset="1" stop-color="#a9bbe6"/></linearGradient><linearGradient id="gold2" x1="0" x2="1"><stop offset="0" stop-color="#e8b655"/><stop offset="0.3" stop-color="#f8e5bb"/><stop offset="0.62" stop-color="#eec77a"/><stop offset="0.68" stop-color="#e6a325"/><stop offset="1" stop-color="#df9a1a"/></linearGradient></defs><rect x="0.5" y="0.5" width="13.5" height="12" fill="#f5f7fc" stroke="#a8b4d0" stroke-width="0.8"/><rect x="0.3" y="0.3" width="14" height="2.4" fill="url(#hdr)"/><path d="M1.5 4.5h5M1.5 7.5h5M1.5 9.5h5" stroke="#7d92cc" stroke-width="1"/><path d="M6 5.2c0-1.5 9.6-1.5 9.6 0v10c0 1.5-9.6 1.5-9.6 0z" fill="url(#gold2)" stroke="#c98a1e" stroke-width="0.5"/><ellipse cx="10.8" cy="5.2" rx="4.8" ry="1.2" fill="#f9e2ae"/></svg>
<div class="t tree" style="left:146px;top:414px">ext.dimension_Supplier</div>
<div class="exp" style="left:110px;top:435px"></div><div class="a" style="left:112px;top:439px;width:5px;height:1px;background:#1c3a7a"></div><div class="a" style="left:114px;top:437px;width:1px;height:5px;background:#1c3a7a"></div>
<svg style="left:125px;top:430px" width="18" height="18"><defs><linearGradient id="hdr" x1="0" y1="0" x2="0" y2="1"><stop offset="0" stop-color="#3f5fb0"/><stop offset="1" stop-color="#a9bbe6"/></linearGradient><linearGradient id="gold2" x1="0" x2="1"><stop offset="0" stop-color="#e8b655"/><stop offset="0.3" stop-color="#f8e5bb"/><stop offset="0.62" stop-color="#eec77a"/><stop offset="0.68" stop-color="#e6a325"/><stop offset="1" stop-color="#df9a1a"/></linearGradient></defs><rect x="0.5" y="0.5" width="13.5" height="12" fill="#f5f7fc" stroke="#a8b4d0" stroke-width="0.8"/><rect x="0.3" y="0.3" width="14" height="2.4" fill="url(#hdr)"/><path d="M1.5 4.5h5M1.5 7.5h5M1.5 9.5h5" stroke="#7d92cc" stroke-width="1"/><path d="M6 5.2c0-1.5 9.6-1.5 9.6 0v10c0 1.5-9.6 1.5-9.6 0z" fill="url(#gold2)" stroke="#c98a1e" stroke-width="0.5"/><ellipse cx="10.8" cy="5.2" rx="4.8" ry="1.2" fill="#f9e2ae"/></svg>
<div class="t tree" style="left:146px;top:432px">ext.dimension_TransactionType</div>
<div class="exp" style="left:110px;top:453px"></div><div class="a" style="left:112px;top:457px;width:5px;height:1px;background:#1c3a7a"></div><div class="a" style="left:114px;top:455px;width:1px;height:5px;background:#1c3a7a"></div>
<svg style="left:125px;top:448px" width="18" height="18"><defs><linearGradient id="hdr" x1="0" y1="0" x2="0" y2="1"><stop offset="0" stop-color="#3f5fb0"/><stop offset="1" stop-color="#a9bbe6"/></linearGradient><linearGradient id="gold2" x1="0" x2="1"><stop offset="0" stop-color="#e8b655"/><stop offset="0.3" stop-color="#f8e5bb"/><stop offset="0.62" stop-color="#eec77a"/><stop offset="0.68" stop-color="#e6a325"/><stop offset="1" stop-color="#df9a1a"/></linearGradient></defs><rect x="0.5" y="0.5" width="13.5" height="12" fill="#f5f7fc" stroke="#a8b4d0" stroke-width="0.8"/><rect x="0.3" y="0.3" width="14" height="2.4" fill="url(#hdr)"/><path d="M1.5 4.5h5M1.5 7.5h5M1.5 9.5h5" stroke="#7d92cc" stroke-width="1"/><path d="M6 5.2c0-1.5 9.6-1.5 9.6 0v10c0 1.5-9.6 1.5-9.6 0z" fill="url(#gold2)" stroke="#c98a1e" stroke-width="0.5"/><ellipse cx="10.8" cy="5.2" rx="4.8" ry="1.2" fill="#f9e2ae"/></svg>
<div class="t tree" style="left:146px;top:450px">ext.fact_Movement</div>
<div class="exp" style="left:110px;top:471px"></div><div class="a" style="left:112px;top:475px;width:5px;height:1px;background:#1c3a7a"></div><div class="a" style="left:114px;top:473px;width:1px;height:5px;background:#1c3a7a"></div>
<svg style="left:125px;top:466px" width="18" height="18"><defs><linearGradient id="hdr" x1="0" y1="0" x2="0" y2="1"><stop offset="0" stop-color="#3f5fb0"/><stop offset="1" stop-color="#a9bbe6"/></linearGradient><linearGradient id="gold2" x1="0" x2="1"><stop offset="0" stop-color="#e8b655"/><stop offset="0.3" stop-color="#f8e5bb"/><stop offset="0.62" stop-color="#eec77a"/><stop offset="0.68" stop-color="#e6a325"/><stop offset="1" stop-color="#df9a1a"/></linearGradient></defs><rect x="0.5" y="0.5" width="13.5" height="12" fill="#f5f7fc" stroke="#a8b4d0" stroke-width="0.8"/><rect x="0.3" y="0.3" width="14" height="2.4" fill="url(#hdr)"/><path d="M1.5 4.5h5M1.5 7.5h5M1.5 9.5h5" stroke="#7d92cc" stroke-width="1"/><path d="M6 5.2c0-1.5 9.6-1.5 9.6 0v10c0 1.5-9.6 1.5-9.6 0z" fill="url(#gold2)" stroke="#c98a1e" stroke-width="0.5"/><ellipse cx="10.8" cy="5.2" rx="4.8" ry="1.2" fill="#f9e2ae"/></svg>
<div class="t tree" style="left:146px;top:468px">ext.fact_Order</div>
<div class="exp" style="left:110px;top:489px"></div><div class="a" style="left:112px;top:493px;width:5px;height:1px;background:#1c3a7a"></div><div class="a" style="left:114px;top:491px;width:1px;height:5px;background:#1c3a7a"></div>
<svg style="left:125px;top:484px" width="18" height="18"><defs><linearGradient id="hdr" x1="0" y1="0" x2="0" y2="1"><stop offset="0" stop-color="#3f5fb0"/><stop offset="1" stop-color="#a9bbe6"/></linearGradient><linearGradient id="gold2" x1="0" x2="1"><stop offset="0" stop-color="#e8b655"/><stop offset="0.3" stop-color="#f8e5bb"/><stop offset="0.62" stop-color="#eec77a"/><stop offset="0.68" stop-color="#e6a325"/><stop offset="1" stop-color="#df9a1a"/></linearGradient></defs><rect x="0.5" y="0.5" width="13.5" height="12" fill="#f5f7fc" stroke="#a8b4d0" stroke-width="0.8"/><rect x="0.3" y="0.3" width="14" height="2.4" fill="url(#hdr)"/><path d="M1.5 4.5h5M1.5 7.5h5M1.5 9.5h5" stroke="#7d92cc" stroke-width="1"/><path d="M6 5.2c0-1.5 9.6-1.5 9.6 0v10c0 1.5-9.6 1.5-9.6 0z" fill="url(#gold2)" stroke="#c98a1e" stroke-width="0.5"/><ellipse cx="10.8" cy="5.2" rx="4.8" ry="1.2" fill="#f9e2ae"/></svg>
<div class="t tree" style="left:146px;top:486px">ext.fact_Purchase</div>
<div class="exp" style="left:110px;top:507px"></div><div class="a" style="left:112px;top:511px;width:5px;height:1px;background:#1c3a7a"></div><div class="a" style="left:114px;top:509px;width:1px;height:5px;background:#1c3a7a"></div>
<svg style="left:125px;top:502px" width="18" height="18"><defs><linearGradient id="hdr" x1="0" y1="0" x2="0" y2="1"><stop offset="0" stop-color="#3f5fb0"/><stop offset="1" stop-color="#a9bbe6"/></linearGradient><linearGradient id="gold2" x1="0" x2="1"><stop offset="0" stop-color="#e8b655"/><stop offset="0.3" stop-color="#f8e5bb"/><stop offset="0.62" stop-color="#eec77a"/><stop offset="0.68" stop-color="#e6a325"/><stop offset="1" stop-color="#df9a1a"/></linearGradient></defs><rect x="0.5" y="0.5" width="13.5" height="12" fill="#f5f7fc" stroke="#a8b4d0" stroke-width="0.8"/><rect x="0.3" y="0.3" width="14" height="2.4" fill="url(#hdr)"/><path d="M1.5 4.5h5M1.5 7.5h5M1.5 9.5h5" stroke="#7d92cc" stroke-width="1"/><path d="M6 5.2c0-1.5 9.6-1.5 9.6 0v10c0 1.5-9.6 1.5-9.6 0z" fill="url(#gold2)" stroke="#c98a1e" stroke-width="0.5"/><ellipse cx="10.8" cy="5.2" rx="4.8" ry="1.2" fill="#f9e2ae"/></svg>
<div class="t tree" style="left:146px;top:504px">ext.fact_Sale</div>
<div class="exp" style="left:110px;top:525px"></div><div class="a" style="left:112px;top:529px;width:5px;height:1px;background:#1c3a7a"></div><div class="a" style="left:114px;top:527px;width:1px;height:5px;background:#1c3a7a"></div>
<svg style="left:125px;top:520px" width="18" height="18"><defs><linearGradient id="hdr" x1="0" y1="0" x2="0" y2="1"><stop offset="0" stop-color="#3f5fb0"/><stop offset="1" stop-color="#a9bbe6"/></linearGradient><linearGradient id="gold2" x1="0" x2="1"><stop offset="0" stop-color="#e8b655"/><stop offset="0.3" stop-color="#f8e5bb"/><stop offset="0.62" stop-color="#eec77a"/><stop offset="0.68" stop-color="#e6a325"/><stop offset="1" stop-color="#df9a1a"/></linearGradient></defs><rect x="0.5" y="0.5" width="13.5" height="12" fill="#f5f7fc" stroke="#a8b4d0" stroke-width="0.8"/><rect x="0.3" y="0.3" width="14" height="2.4" fill="url(#hdr)"/><path d="M1.5 4.5h5M1.5 7.5h5M1.5 9.5h5" stroke="#7d92cc" stroke-width="1"/><path d="M6 5.2c0-1.5 9.6-1.5 9.6 0v10c0 1.5-9.6 1.5-9.6 0z" fill="url(#gold2)" stroke="#c98a1e" stroke-width="0.5"/><ellipse cx="10.8" cy="5.2" rx="4.8" ry="1.2" fill="#f9e2ae"/></svg>
<div class="t tree" style="left:146px;top:522px">ext.fact_StockHolding</div>
<div class="exp" style="left:110px;top:543px"></div><div class="a" style="left:112px;top:547px;width:5px;height:1px;background:#1c3a7a"></div><div class="a" style="left:114px;top:545px;width:1px;height:5px;background:#1c3a7a"></div>
<svg style="left:125px;top:538px" width="18" height="18"><defs><linearGradient id="hdr" x1="0" y1="0" x2="0" y2="1"><stop offset="0" stop-color="#3f5fb0"/><stop offset="1" stop-color="#a9bbe6"/></linearGradient><linearGradient id="gold2" x1="0" x2="1"><stop offset="0" stop-color="#e8b655"/><stop offset="0.3" stop-color="#f8e5bb"/><stop offset="0.62" stop-color="#eec77a"/><stop offset="0.68" stop-color="#e6a325"/><stop offset="1" stop-color="#df9a1a"/></linearGradient></defs><rect x="0.5" y="0.5" width="13.5" height="12" fill="#f5f7fc" stroke="#a8b4d0" stroke-width="0.8"/><rect x="0.3" y="0.3" width="14" height="2.4" fill="url(#hdr)"/><path d="M1.5 4.5h5M1.5 7.5h5M1.5 9.5h5" stroke="#7d92cc" stroke-width="1"/><path d="M6 5.2c0-1.5 9.6-1.5 9.6 0v10c0 1.5-9.6 1.5-9.6 0z" fill="url(#gold2)" stroke="#c98a1e" stroke-width="0.5"/><ellipse cx="10.8" cy="5.2" rx="4.8" ry="1.2" fill="#f9e2ae"/></svg>
<div class="t tree" style="left:146px;top:540px">ext.fact_Transaction</div>
<div class="exp" style="left:72px;top:561px"></div><div class="a" style="left:74px;top:565px;width:5px;height:1px;background:#1c3a7a"></div><div class="a" style="left:76px;top:563px;width:1px;height:5px;background:#1c3a7a"></div>
<svg style="left:88px;top:557px" width="16" height="16"><path d="M1 2.5h5l0.8-1.5h7.2v11H1z" fill="#dcb67a"/><path d="M7.5 2h6v1.2h-6z" fill="#f3e3c3"/></svg>
<div class="t tree" style="left:108px;top:558px">Views</div>
<div class="exp" style="left:72px;top:579px"></div><div class="a" style="left:74px;top:583px;width:5px;height:1px;background:#1c3a7a"></div><div class="a" style="left:76px;top:581px;width:1px;height:5px;background:#1c3a7a"></div>
<svg style="left:88px;top:575px" width="16" height="16"><path d="M1 2.5h5l0.8-1.5h7.2v11H1z" fill="#dcb67a"/><path d="M7.5 2h6v1.2h-6z" fill="#f3e3c3"/></svg>
<div class="t tree" style="left:108px;top:576px"><span style="letter-spacing:-0.4px">External Resources</span></div>
<div class="exp" style="left:72px;top:597px"></div><div class="a" style="left:74px;top:601px;width:5px;height:1px;background:#1c3a7a"></div><div class="a" style="left:76px;top:599px;width:1px;height:5px;background:#1c3a7a"></div>
<svg style="left:88px;top:593px" width="16" height="16"><path d="M1 2.5h5l0.8-1.5h7.2v11H1z" fill="#dcb67a"/><path d="M7.5 2h6v1.2h-6z" fill="#f3e3c3"/></svg>
<div class="t tree" style="left:108px;top:594px">Programmability</div>
<div class="exp" style="left:72px;top:615px"></div><div class="a" style="left:74px;top:619px;width:5px;height:1px;background:#1c3a7a"></div><div class="a" style="left:76px;top:617px;width:1px;height:5px;background:#1c3a7a"></div>
<svg style="left:88px;top:611px" width="16" height="16"><path d="M1 2.5h5l0.8-1.5h7.2v11H1z" fill="#dcb67a"/><path d="M7.5 2h6v1.2h-6z" fill="#f3e3c3"/></svg>
<div class="t tree" style="left:108px;top:612px">Storage</div>
<div class="exp" style="left:72px;top:633px"></div><div class="a" style="left:74px;top:637px;width:5px;height:1px;background:#1c3a7a"></div><div class="a" style="left:76px;top:635px;width:1px;height:5px;background:#1c3a7a"></div>
<svg style="left:88px;top:629px" width="16" height="16"><path d="M1 2.5h5l0.8-1.5h7.2v11H1z" fill="#dcb67a"/><path d="M7.5 2h6v1.2h-6z" fill="#f3e3c3"/></svg>
<div class="t tree" style="left:108px;top:630px">Security</div>
</div>
</div>
<!-- red highlight -->
<div class="a" style="left:8px;top:302px;width:407px;height:257px;border:3px solid #e8412c"></div>
<!-- OE hscroll -->
<div class="sb" style="left:8px;top:648px;width:405px;height:17px"></div>
<div class="th" style="left:25px;top:652px;width:355px;height:9px"></div>

<!-- DOCUMENT WELL -->
<div class="a" style="left:422px;top:109px;width:260px;height:21px;background:#fff29d"></div>
<div class="t" style="left:426px;top:114px;letter-spacing:-0.27px;color:#1e1e1e">SQLQuery5.sql - sa...(LoaderRC60 (168))*</div>
<div class="a" style="left:422px;top:128px;width:358px;height:2px;background:#fff29d"></div>
<div class="a" style="left:422px;top:130px;width:358px;height:538px;background:#8e9bbc"></div>
<div class="a" style="left:423px;top:130px;width:356px;height:537px;background:#fff"></div>
<!-- editor -->
<div class="a" style="left:423px;top:130px;width:339px;height:252px;background:#fff"></div>
<div class="a" style="left:423px;top:130px;width:17px;height:252px;background:#e6e7e8"></div>
<div class="a" style="left:443px;top:130px;width:4px;height:240px;background:#ffe55c"></div>
<div class="a" style="left:448px;top:130px;width:314px;height:252px;overflow:hidden">
<div class="t code" style="left:69px;top:3px">[WWI Purchase Order ID] [int] <span class="op">NULL,</span></div>
<div class="t code" style="left:69px;top:19px">[Supplier Invoice Number] [nvarchar]<span class="op">(</span>20<span class="op">) NULL,</span></div>
<div class="t code" style="left:69px;top:35px">[Total Excluding Tax] [decimal]<span class="op">(</span>18<span class="op">,</span> 2<span class="op">) NOT NULL,</span></div>
<div class="t code" style="left:69px;top:51px">[Tax Amount] [decimal]<span class="op">(</span>18<span class="op">,</span> 2<span class="op">) NOT NULL,</span></div>
<div class="t code" style="left:69px;top:67px">[Total Including Tax] [decimal]<span class="op">(</span>18<span class="op">,</span> 2<span class="op">) NOT NULL,</span></div>
<div class="t code" style="left:69px;top:83px">[Outstanding Balance] [decimal]<span class="op">(</span>18<span class="op">,</span> 2<span class="op">) NOT NULL,</span></div>
<div class="t code" style="left:69px;top:99px">[Is Finalized] [bit] <span class="op">NOT NULL,</span></div>
<div class="t code" style="left:69px;top:115px">[Lineage Key] [int] <span class="op">NOT NULL</span></div>
<div class="t code" style="left:40px;top:131px"><span class="op">)</span></div>
<div class="t code" style="left:40px;top:147px"><span class="kw">WITH</span> <span class="op">(</span> <span class="kw">LOCATION</span> <span class="op">=</span><span class="st">'/v1/fact_Transaction/'</span><span class="op">,</span></div>
<div class="t code" style="left:69px;top:163px"><span class="kw">DATA_SOURCE</span> <span class="op">=</span> WWIStorage<span class="op">,</span></div>
<div class="t code" style="left:69px;top:179px"><span class="kw">FILE_FORMAT</span> <span class="op">=</span> TextFileFormat<span class="op">,</span></div>
<div class="t code" style="left:69px;top:195px"><span class="kw">REJECT_TYPE</span> <span class="op">=</span> <span class="kw">VALUE</span><span class="op">,</span></div>
<div class="t code" style="left:69px;top:211px"><span class="kw">REJECT_VALUE</span> <span class="op">=</span> 0</div>
<div class="t code" style="left:40px;top:227px"><span class="op">);</span></div>
</div>
<!-- editor vscroll -->
<div class="sb" style="left:762px;top:130px;width:17px;height:252px"></div>
<div class="a" style="left:762px;top:130px;width:17px;height:16px;background:#e4e9f4;border-left:1px solid #8e9bbc;border-bottom:1px solid #8e9bbc"></div>
<div class="a" style="left:762px;top:163px;width:17px;height:2px;background:#0000ff"></div>
<div class="a" style="left:763px;top:162px;width:4px;height:193px;background:#ffe55c"></div>
<div class="th" style="left:767px;top:344px;width:8px;height:11px"></div>
<!-- editor hscroll -->
<div class="sb" style="left:423px;top:382px;width:356px;height:17px"></div>
<div class="a" style="left:423px;top:382px;width:60px;height:17px;background:#fff;border:1px solid #c6cad6"></div>
<div class="t" style="left:426px;top:386px;font-size:11px;color:#000">100 %</div>
<div class="th" style="left:500px;top:386px;width:118px;height:9px"></div>
<!-- splitter / messages tab strip -->
<div class="a" style="left:423px;top:399px;width:356px;height:26px;background:#f0f0f0"></div>
<div class="a" style="left:423px;top:403px;width:86px;height:22px;background:#fff;border-top:1px solid #d6d6d6;border-right:1px solid #d6d6d6"></div>
<div class="t" style="left:453px;top:409px;font-size:11px;letter-spacing:-0.4px;color:#1e1e1e">Messages</div>
<div class="a" style="left:508px;top:424px;width:269px;height:1px;background:#d6d6d6"></div>
<div class="a" style="left:776px;top:424px;width:1px;height:216px;background:#d0d0d0"></div>
<div class="a" style="left:423px;top:425px;width:353px;height:215px;background:#fff"></div>
<div class="t" style="left:448px;top:429px;font-family:'Liberation Mono',monospace;font-size:11.6px;color:#000;-webkit-text-stroke:0.12px #000">Commands completed successfully.</div>
<div class="sb" style="left:758px;top:426px;width:17px;height:214px"></div>
<div class="th" style="left:762px;top:443px;width:9px;height:150px"></div>
<div class="sb" style="left:423px;top:623px;width:352px;height:17px"></div>
<div class="a" style="left:427px;top:623px;width:60px;height:17px;background:#fff;border:1px solid #c6cad6"></div>
<div class="t" style="left:430px;top:627px;font-size:11px;color:#000">100 %</div>
<div class="th" style="left:503px;top:627px;width:171px;height:9px"></div>
<div class="a" style="left:423px;top:640px;width:356px;height:5px;background:#fff"></div>
<div class="a" style="left:423px;top:642px;width:353px;height:1px;background:#d6d6d6"></div>
<div class="a" style="left:776px;top:640px;width:1px;height:3px;background:#d6d6d6"></div>
<!-- query status bar -->
<div class="a" style="left:423px;top:645px;width:356px;height:22px;background:#f0e69c"></div>
<div class="a" style="left:423px;top:644px;width:356px;height:23px;overflow:hidden">
<div class="t qs" style="left:-5px;top:6px;letter-spacing:-0.1px">e.windows...</div>
</div>
<div class="qsep" style="left:491px;top:650px"></div>
<div class="t qs" style="left:496px;top:650px;letter-spacing:-0.5px">LoaderRC60 (168)</div>
<div class="qsep" style="left:596px;top:650px"></div>
<div class="t qs" style="left:601px;top:650px;letter-spacing:-0.3px">SampleDW</div>
<div class="qsep" style="left:667px;top:650px"></div>
<div class="t qs" style="left:672px;top:650px;letter-spacing:-0.6px">00:01:18</div>
<div class="qsep" style="left:722px;top:650px"></div>
<div class="t qs" style="left:727px;top:650px;letter-spacing:-0.3px">0 rows</div>

<!-- status bar -->
<div class="a" style="left:0;top:674px;width:786px;height:23px;background:#007acc"></div>
<div class="t" style="left:3.5px;top:680px;letter-spacing:-0.6px;color:#fff">Ready</div>
<div class="t" style="left:414px;top:680px;color:#fff">Ln 1</div>
<div class="t" style="left:506px;top:680px;color:#fff">Col 5</div>
<div class="t" style="left:598px;top:680px;color:#fff">Ch 5</div>
<div class="t" style="left:733px;top:680px;color:#fff">INS</div>
<svg style="left:0;top:0" width="786" height="697" viewBox="0 0 786 697">
<!-- app icon -->
<path d="M12 9.5c0-2.5 10-2.5 10 0v10c0 2.5-10 2.5-10 0z" fill="#f5b21e"/>
<ellipse cx="17" cy="9.8" rx="4" ry="1.6" fill="#fff3c8"/>
<path d="M25 9.5h4.5v4" fill="none" stroke="#1e8a24" stroke-width="2.2"/>
<path d="M13 21v4h4.5" fill="none" stroke="#1e8a24" stroke-width="2.2"/>
<path d="M19 25l10-8M20 17.5l8 7.5" stroke="#2a2a2a" stroke-width="1.6"/>
<path d="M27 16.5l3 0.8-1.5 2.2z" fill="#2a2a2a"/>
<!-- search -->
<circle cx="674" cy="10" r="3.3" fill="none" stroke="#555" stroke-width="1.8"/>
<path d="M671.5 12.5l-4.5 4.5" stroke="#555" stroke-width="2.2"/>
<!-- min max close -->
<rect x="697" y="15" width="10" height="3" fill="#1e1e1e"/>
<rect x="730.5" y="9.5" width="9" height="8" fill="none" stroke="#1e1e1e" stroke-width="1.2"/>
<rect x="730" y="9" width="10" height="2.5" fill="#1e1e1e"/>
<path d="M764.5 10.3l9 7.4M773.5 10.3l-9 7.4" stroke="#1e1e1e" stroke-width="1.8"/>

<!-- OE caption icons -->
<path d="M367.5 117.5h7l-3.5 4z" fill="#fff"/>
<path d="M386 115.5h4v5.5h-4z" fill="none" stroke="#fff" stroke-width="1"/>
<rect x="389" y="115" width="1.5" height="6" fill="#fff"/>
<rect x="384" y="121" width="7.5" height="1" fill="#fff"/>
<rect x="387.5" y="122" width="1" height="4" fill="#fff"/>
<path d="M400 116.5l8.5 7.5M408.5 116.5l-8.5 7.5" stroke="#fff" stroke-width="1.2"/>
<!-- Connect toolbar -->
<path d="M61 143h6l-3 3z" fill="#1e1e1e"/>
<g fill="#2a2a2a"><rect x="80" y="137" width="2" height="3"/><rect x="84" y="137" width="2" height="3"/><rect x="79" y="141" width="8" height="1"/><rect x="80" y="142" width="6" height="4"/><rect x="82" y="146" width="2" height="5"/></g>
<path d="M98.3 137.5l5 5.2M103.3 137.5l-5 5.2" stroke="#c8341f" stroke-width="1.2"/>
<g fill="#2a2a2a"><rect x="105" y="137" width="2" height="3"/><rect x="109" y="137" width="2" height="3"/><rect x="104" y="141" width="8" height="1"/><rect x="105" y="142" width="6" height="4"/><rect x="107" y="146" width="2" height="5"/></g>
<rect x="123" y="140" width="8" height="8" fill="#a9adb7"/>
<path d="M143 139.5h12l-4.5 5.5v6.5h-3v-6.5z" fill="#b4b8c2"/>
<path d="M175.2 142.2a5 5 0 1 1 -3.4-2.3" fill="none" stroke="#00539c" stroke-width="2.2"/>
<path d="M170.3 136.8l5.2 2.6-4.3 3.6z" fill="#00539c"/>
<path d="M186.3 145.2h4l1.7 3.2 2-9.6 1.9 8.8 1.4-2.4h2.4" fill="none" stroke="#232323" stroke-width="1.3"/>

<!-- Doc tab icons -->
<g fill="#5a5036">
<rect x="649" y="119" width="3" height="1"/>
<rect x="652" y="116" width="1" height="7"/>
<rect x="653" y="117" width="4" height="1"/>
<rect x="656" y="117" width="1" height="5"/>
<rect x="653" y="120" width="4" height="2"/>
</g>
<path d="M667.8 115.5l8.4 7.5M676.2 115.5l-8.4 7.5" stroke="#5a5036" stroke-width="1.3"/>
<path d="M769.5 114h7M769.5 116h7" stroke="#fff" stroke-width="1.2"/>
<path d="M769 118.5h8l-4 4z" fill="#fff"/>

<!-- editor splitter button icon -->
<path d="M765 137.5h11M765 139.8h11" stroke="#1e1e1e" stroke-width="1.1"/>
<path d="M770.5 133v3.5M770.5 141v3.5" stroke="#1e1e1e" stroke-width="1.1"/>
<path d="M768.2 134.2l2.3-2.7 2.3 2.7zM768.2 143.4l2.3 2.7 2.3-2.7z" fill="#1e1e1e"/>
<!-- editor vscroll arrows -->
<path d="M766 158h9l-4.5-5z" fill="#868999"/>
<path d="M766 370h9l-4.5 5.5z" fill="#868999"/>
<!-- editor zoom dropdown, hscroll arrows -->
<path d="M472 389h6l-3 3z" fill="#1e1e1e"/>
<path d="M494 386v9l-5-4.5z" fill="#868999"/>
<path d="M751 386v9l5-4.5z" fill="#868999"/>
<!-- messages icon -->
<g fill="#333">
<rect x="439" y="406" width="7" height="5"/>
<rect x="441" y="411" width="5" height="6"/>
</g>
<rect x="440" y="407" width="5" height="1" fill="#fff"/>
<rect x="440" y="409" width="5" height="1" fill="#fff"/>
<rect x="444" y="415" width="1" height="1" fill="#fff"/>
<path d="M432.5 410.5h5l2 2v7h-7z" fill="#fff" stroke="#333" stroke-width="1"/>
<path d="M437.5 410.5v2h2" fill="#333" stroke="#333" stroke-width="1"/>
<rect x="434" y="413" width="3" height="1" fill="#333"/>
<rect x="434" y="415" width="4" height="1" fill="#333"/>
<rect x="434" y="417" width="4" height="1" fill="#333"/>
<!-- messages vscroll arrows -->
<path d="M762 437h9l-4.5-5z" fill="#868999"/>
<path d="M762 612h9l-4.5 5z" fill="#868999"/>
<!-- messages zoom dropdown + hscroll arrows -->
<path d="M477 630.5h6l-3 3z" fill="#1e1e1e"/>
<path d="M498 628v8.5l-5-4.25z" fill="#868999"/>
<path d="M747 627.5v9l5-4.5z" fill="#868999"/>
<!-- OE hscroll arrows -->
<path d="M19 652v9l-5-4.5z" fill="#868999"/>
<path d="M402 652v9l5-4.5z" fill="#868999"/>
<!-- status grip -->
<g fill="#9fc9ec">
<rect x="779" y="683" width="1" height="1"/>
<rect x="777" y="685" width="1" height="1"/><rect x="779" y="685" width="1" height="1"/>
<rect x="775" y="687" width="1" height="1"/><rect x="777" y="687" width="1" height="1"/><rect x="779" y="687" width="1" height="1"/>
<rect x="773" y="689" width="1" height="1"/><rect x="775" y="689" width="1" height="1"/><rect x="777" y="689" width="1" height="1"/><rect x="779" y="689" width="1" height="1"/>
</g>
</svg>

<div class="a" style="left:0;top:0;width:786px;height:1px;background:#b9bcc4"></div>
<div class="a" style="left:1px;top:0;width:1px;height:697px;background:#b9bcc4"></div>
<div class="a" style="left:1px;top:696px;width:785px;height:1px;background:#b9bcc4"></div>
</body></html>
